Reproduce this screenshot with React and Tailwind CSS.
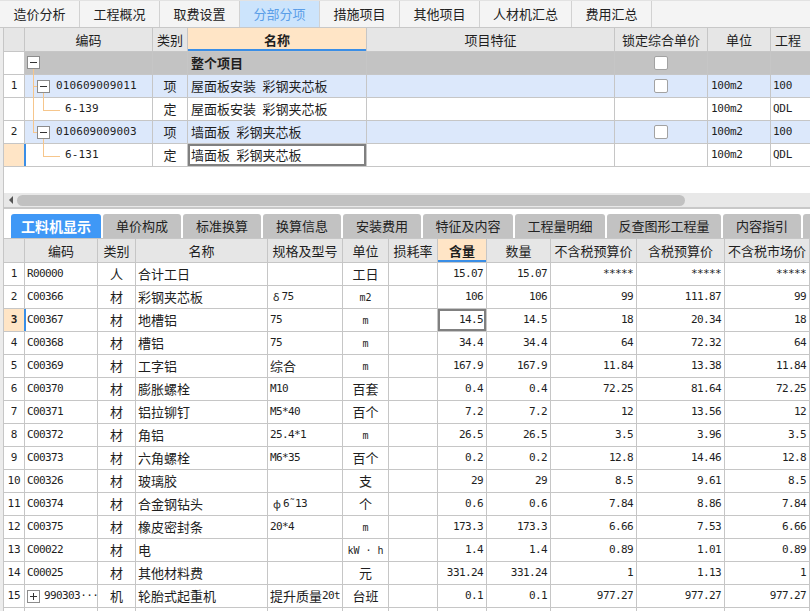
import React from "react";

const mono = "font-['DejaVu_Sans_Mono','Liberation_Mono',monospace]";
const CJK_RE = /[\u3400-\u9fff\u3000-\u303f\uff00-\uffef]/;
const GREEK_RE = /[\u0370-\u03ff]/;

function Mixed({ text, small }) {
  const parts =
    text.match(/[\u3400-\u9fff\u3000-\u303f\uff00-\uffef]+|[\u0370-\u03ff]+|[^\u3400-\u9fff\u3000-\u303f\uff00-\uffef\u0370-\u03ff]+/g) || [];
  return parts.map((p, i) =>
    CJK_RE.test(p) ? (
      <span key={i} className="text-[13px]">{p}</span>
    ) : GREEK_RE.test(p) ? (
      <span key={i} className="font-['Noto_Sans',sans-serif] text-[11px] pl-[3px] pr-[2px]">{p}</span>
    ) : (
      <span key={i} className={`${mono} ${small ? "text-[10px]" : "text-[11px] tracking-[-0.6px]"}`}>{p}</span>
    )
  );
}

const topTabs = [
  { t: "造价分析", w: "w-[80px]" },
  { t: "工程概况", w: "w-[80px]" },
  { t: "取费设置", w: "w-[80px]" },
  { t: "分部分项", w: "w-[80px]", a: true },
  { t: "措施项目", w: "w-[80px]" },
  { t: "其他项目", w: "w-[80px]" },
  { t: "人材机汇总", w: "w-[92px]" },
  { t: "费用汇总", w: "w-[80px]" },
];

function TopTabs() {
  return (
    <div className="flex h-[28px] bg-[#f4f4f4] border-b border-[#c8c8c8] border-t border-t-[#e2e2e2]">
      {topTabs.map((x) => (
        <div
          key={x.t}
          className={`${x.w} flex items-center justify-center border-r border-[#d2d2d2] text-[13px] ${
            x.a ? "bg-[#cce4fc] text-[#5b9ee8]" : "text-[#222]"
          }`}
        >
          {x.t}
        </div>
      ))}
    </div>
  );
}

const TOPCOLS = "grid grid-cols-[21px_128px_35px_179px_248px_93px_63px_80px]";
const LINE = "border-[#c6c6c6]";

function Check() {
  return <div className="w-[14px] h-[14px] rounded-[2px] border border-[#a2a2a2] bg-white" />;
}

function Box({ cls, plus }) {
  return (
    <div className={`absolute w-[13px] h-[13px] border border-[#8c8c8c] bg-white flex items-center justify-center ${cls}`}>
      <div className="relative w-[7px] h-px bg-[#333]">
        {plus && <div className="absolute left-[3px] top-[-3px] w-px h-[7px] bg-[#333]" />}
      </div>
    </div>
  );
}

const OR = "absolute bg-[#f6c68c]";

function Tree({ kind }) {
  if (kind === "root")
    return (
      <>
        <div className={`${OR} left-[8px] top-[17px] bottom-[-1px] w-px`} />
        <Box cls="left-[2px] top-[4px]" />
      </>
    );
  if (kind === "item1")
    return (
      <>
        <div className={`${OR} left-[8px] top-[-1px] bottom-[-1px] w-px`} />
        <div className={`${OR} left-[8px] top-[11px] w-[4px] h-px`} />
        <div className={`${OR} left-[18px] top-[17px] bottom-[-1px] w-px`} />
        <Box cls="left-[12px] top-[5px]" />
      </>
    );
  if (kind === "sub1")
    return (
      <>
        <div className={`${OR} left-[8px] top-[-1px] bottom-[-1px] w-px`} />
        <div className={`${OR} left-[18px] top-[-1px] h-[13px] w-px`} />
        <div className={`${OR} left-[18px] top-[12px] w-[17px] h-px`} />
      </>
    );
  if (kind === "item2")
    return (
      <>
        <div className={`${OR} left-[8px] top-[-1px] h-[12px] w-px`} />
        <div className={`${OR} left-[8px] top-[11px] w-[4px] h-px`} />
        <div className={`${OR} left-[18px] top-[17px] bottom-[-1px] w-px`} />
        <Box cls="left-[12px] top-[5px]" />
      </>
    );
  return (
    <>
      <div className={`${OR} left-[18px] top-[-1px] h-[13px] w-px`} />
      <div className={`${OR} left-[18px] top-[12px] w-[17px] h-px`} />
    </>
  );
}

const topRows = [
  { tree: "root", num: "", code: "", cat: "", name: "整个项目", bg: "bg-[#c3c3c3]", check: true, unit: "", qty: "", bold: true },
  { tree: "item1", num: "1", code: "010609009011", cat: "项", name: "屋面板安装\u2002彩钢夹芯板", bg: "bg-[#dce8fb]", check: true, unit: "100m2", qty: "100" },
  { tree: "sub1", num: "", code: "6-139", cat: "定", name: "屋面板安装\u2002彩钢夹芯板", bg: "bg-white", unit: "100m2", qty: "QDL" },
  { tree: "item2", num: "2", code: "010609009003", cat: "项", name: "墙面板\u2002彩钢夹芯板", bg: "bg-[#dce8fb]", check: true, unit: "100m2", qty: "100" },
  { tree: "sub2", num: "", code: "6-131", cat: "定", name: "墙面板\u2002彩钢夹芯板", bg: "bg-white", unit: "100m2", qty: "QDL", sel: true },
];

function TopTable() {
  const H = `flex items-center justify-center h-full border-r ${LINE} text-[13px]`;
  return (
    <div className="bg-white">
      <div className={`${TOPCOLS} h-[24px] bg-[#e6e6e6] border-b ${LINE}`}>
        <div className={H} />
        <div className={H}>编码</div>
        <div className={H}>类别</div>
        <div className={`${H} bg-[#ffe5c6] font-bold shadow-[inset_0_-2px_0_#3a8ee6]`}>名称</div>
        <div className={H}>项目特征</div>
        <div className={H}>锁定综合单价</div>
        <div className={H}>单位</div>
        <div className="flex items-center h-full text-[13px] pl-[4px] whitespace-nowrap">工程</div>
      </div>
      {topRows.map((r, i) => {
        const C = `flex items-center h-full border-r ${LINE}`;
        const isItem = r.tree === "item1" || r.tree === "item2";
        return (
          <div key={i} className={`${TOPCOLS} h-[23px] border-b ${LINE} ${r.bg} text-[#1e1e1e]`}>
            <div
              className={`${C} justify-center ${mono} text-[11px] ${
                r.sel ? "bg-[#ffe5c6] border-r-[#3a8ee6]" : "bg-white"
              }`}
            >
              {r.num}
            </div>
            <div className={`${C} relative ${r.sel ? "shadow-[inset_1px_0_0_#3a8ee6]" : ""}`}>
              <Tree kind={r.tree} />
              {r.code && (
                <span className={`${mono} text-[11px] tracking-[0.1px] ${isItem ? "pl-[31px]" : "pl-[40px]"}`}>
                  {r.code}
                </span>
              )}
            </div>
            <div className={`${C} justify-center text-[13px]`}>{r.cat}</div>
            <div
              className={`${C} pl-[3px] text-[13px] whitespace-pre ${r.bold ? "font-bold" : ""} ${
                r.sel ? "shadow-[inset_0_0_0_2px_#808080]" : ""
              }`}
            >
              {r.name}
            </div>
            <div className={C} />
            <div className={`${C} justify-center`}>{r.check && <Check />}</div>
            <div className={`${C} pl-[3px] ${mono} text-[11px] tracking-[-0.3px]`}>{r.unit}</div>
            <div className={`flex items-center h-full pl-[2px] ${mono} text-[11px] tracking-[-0.3px]`}>{r.qty}</div>
          </div>
        );
      })}
    </div>
  );
}

function ScrollBar() {
  return (
    <div className="h-[14px] bg-[#e8e8e8] flex items-center">
      <div className="w-[13px] flex items-center justify-center">
        <div className="w-0 h-0 border-y-[4px] border-y-transparent border-r-[4px] border-r-[#555]" />
      </div>
      <div className="w-[668px] h-[11px] rounded-full bg-[#c1c1c1]" />
    </div>
  );
}

const bottomTabs = [
  { t: "工料机显示", w: "w-[90px]", a: true },
  { t: "单价构成", w: "w-[78px]" },
  { t: "标准换算", w: "w-[78px]" },
  { t: "换算信息", w: "w-[78px]" },
  { t: "安装费用", w: "w-[78px]" },
  { t: "特征及内容", w: "w-[90px]" },
  { t: "工程量明细", w: "w-[90px]" },
  { t: "反查图形工程量", w: "w-[114px]" },
  { t: "内容指引", w: "w-[78px]" },
  { t: "", w: "w-[78px]" },
];

function BottomTabs() {
  return (
    <div className="flex gap-[2px] pl-[7px] h-[24px] overflow-hidden">
      {bottomTabs.map((x, i) => (
        <div
          key={i}
          className={`${x.w} shrink-0 rounded-t-[3px] flex items-center justify-center whitespace-nowrap ${
            x.a ? "bg-[#3f98f6] text-white font-bold text-[14px]" : "bg-[#c2c2c2] text-[#222] text-[13px]"
          }`}
        >
          {x.t}
        </div>
      ))}
    </div>
  );
}

const BCOLS = "grid grid-cols-[21px_73px_38px_132px_75px_46px_49px_49px_64px_86px_88px_85px_40px]";

const items = [
  ["R00000", "人", "合计工日", "", "工日", "15.07", "15.07", "*****", "*****", "*****"],
  ["C00366", "材", "彩钢夹芯板", "δ75", "m2", "106", "106", "99", "111.87", "99"],
  ["C00367", "材", "地槽铝", "75", "m", "14.5", "14.5", "18", "20.34", "18"],
  ["C00368", "材", "槽铝", "75", "m", "34.4", "34.4", "64", "72.32", "64"],
  ["C00369", "材", "工字铝", "综合", "m", "167.9", "167.9", "11.84", "13.38", "11.84"],
  ["C00370", "材", "膨胀螺栓", "M10", "百套", "0.4", "0.4", "72.25", "81.64", "72.25"],
  ["C00371", "材", "铝拉铆钉", "M5*40", "百个", "7.2", "7.2", "12", "13.56", "12"],
  ["C00372", "材", "角铝", "25.4*1", "m", "26.5", "26.5", "3.5", "3.96", "3.5"],
  ["C00373", "材", "六角螺栓", "M6*35", "百个", "0.2", "0.2", "12.8", "14.46", "12.8"],
  ["C00326", "材", "玻璃胶", "", "支", "29", "29", "8.5", "9.61", "8.5"],
  ["C00374", "材", "合金钢钻头", "φ6˜13", "个", "0.6", "0.6", "7.84", "8.86", "7.84"],
  ["C00375", "材", "橡皮密封条", "20*4", "m", "173.3", "173.3", "6.66", "7.53", "6.66"],
  ["C00022", "材", "电", "", "kW · h", "1.4", "1.4", "0.89", "1.01", "0.89"],
  ["C00025", "材", "其他材料费", "", "元", "331.24", "331.24", "1", "1.13", "1"],
  ["990303···", "机", "轮胎式起重机", "提升质量20t", "台班", "0.1", "0.1", "977.27", "977.27", "977.27"],
  ["", "", "", "", "", "", "", "", "", ""],
];

function BottomTable() {
  const H = `flex items-center justify-center h-full border-r ${LINE} text-[13px] whitespace-nowrap overflow-hidden`;
  const heads = ["编码", "类别", "名称", "规格及型号", "单位", "损耗率"];
  return (
    <div className={`border-t ${LINE} bg-white`}>
      <div className={`${BCOLS} h-[24px] bg-[#e6e6e6] border-b ${LINE}`}>
        <div className={H} />
        {heads.map((h) => (
          <div key={h} className={H}>{h}</div>
        ))}
        <div className={`${H} bg-[#ffe5c6] font-bold shadow-[inset_0_-2px_0_#3a8ee6]`}>含量</div>
        <div className={H}>数量</div>
        <div className={H}>不含税预算价</div>
        <div className={H}>含税预算价</div>
        <div className={H}>不含税市场价</div>
        <div className={H} />
      </div>
      {items.map((r, i) => {
        const C = `flex items-center h-full border-r ${LINE} overflow-hidden whitespace-nowrap`;
        const N = `${C} justify-end pr-[3px] ${mono} text-[11px] tracking-[-0.6px]`;
        const sel = i === 2;
        const last = i === 14;
        return (
          <div key={i} className={`${BCOLS} h-[23px] border-b ${LINE} text-[#1e1e1e]`}>
            <div
              className={`${C} justify-center ${mono} text-[11px] ${
                sel ? "bg-[#ffe5c6] font-bold border-r-[#3a8ee6]" : ""
              }`}
            >
              {r[0] || r[1] ? i + 1 : ""}
            </div>
            <div className={`${C} pl-[2px] ${sel ? "shadow-[inset_1px_0_0_#3a8ee6]" : ""}`}>
              {last && (
                <div className="w-[13px] h-[13px] mr-[4px] border border-[#8c8c8c] bg-white flex items-center justify-center shrink-0">
                  <div className="relative w-[7px] h-px bg-[#333]">
                    <div className="absolute left-[3px] top-[-3px] w-px h-[7px] bg-[#333]" />
                  </div>
                </div>
              )}
              <span className={`${mono} text-[11px] tracking-[-0.6px]`}>{r[0]}</span>
            </div>
            <div className={`${C} justify-center text-[13px]`}>{r[1]}</div>
            <div className={`${C} pl-[2px] text-[13px]`}>{r[2]}</div>
            <div className={`${C} pl-[2px]`}>
              <Mixed text={r[3]} />
            </div>
            <div className={`${C} justify-center whitespace-pre`}>
              <Mixed text={r[4]} small />
            </div>
            <div className={C} />
            <div className={`${N} ${sel ? "shadow-[inset_0_0_0_2px_#808080]" : ""}`}>{r[5]}</div>
            <div className={N}>{r[6]}</div>
            <div className={N}>{r[7]}</div>
            <div className={N}>{r[8]}</div>
            <div className={N}>{r[9]}</div>
            <div className={C} />
          </div>
        );
      })}
    </div>
  );
}

export default function App() {
  return (
    <div className="w-[810px] h-[611px] overflow-hidden bg-white font-['Noto_Sans_CJK_SC','Noto_Sans',sans-serif] text-[#1e1e1e]">
      <TopTabs />
      <div className="pl-[3px] bg-[#ececec] h-[583px]">
        <div className={`h-full bg-white border-l ${LINE} overflow-hidden`}>
          <TopTable />
          <div className="h-[26px]" />
          <ScrollBar />
          <div className="h-[2px] bg-[#c8c8c8]" />
          <div className="h-[5px]" />
          <BottomTabs />
          <BottomTable />
        </div>
      </div>
    </div>
  );
}
